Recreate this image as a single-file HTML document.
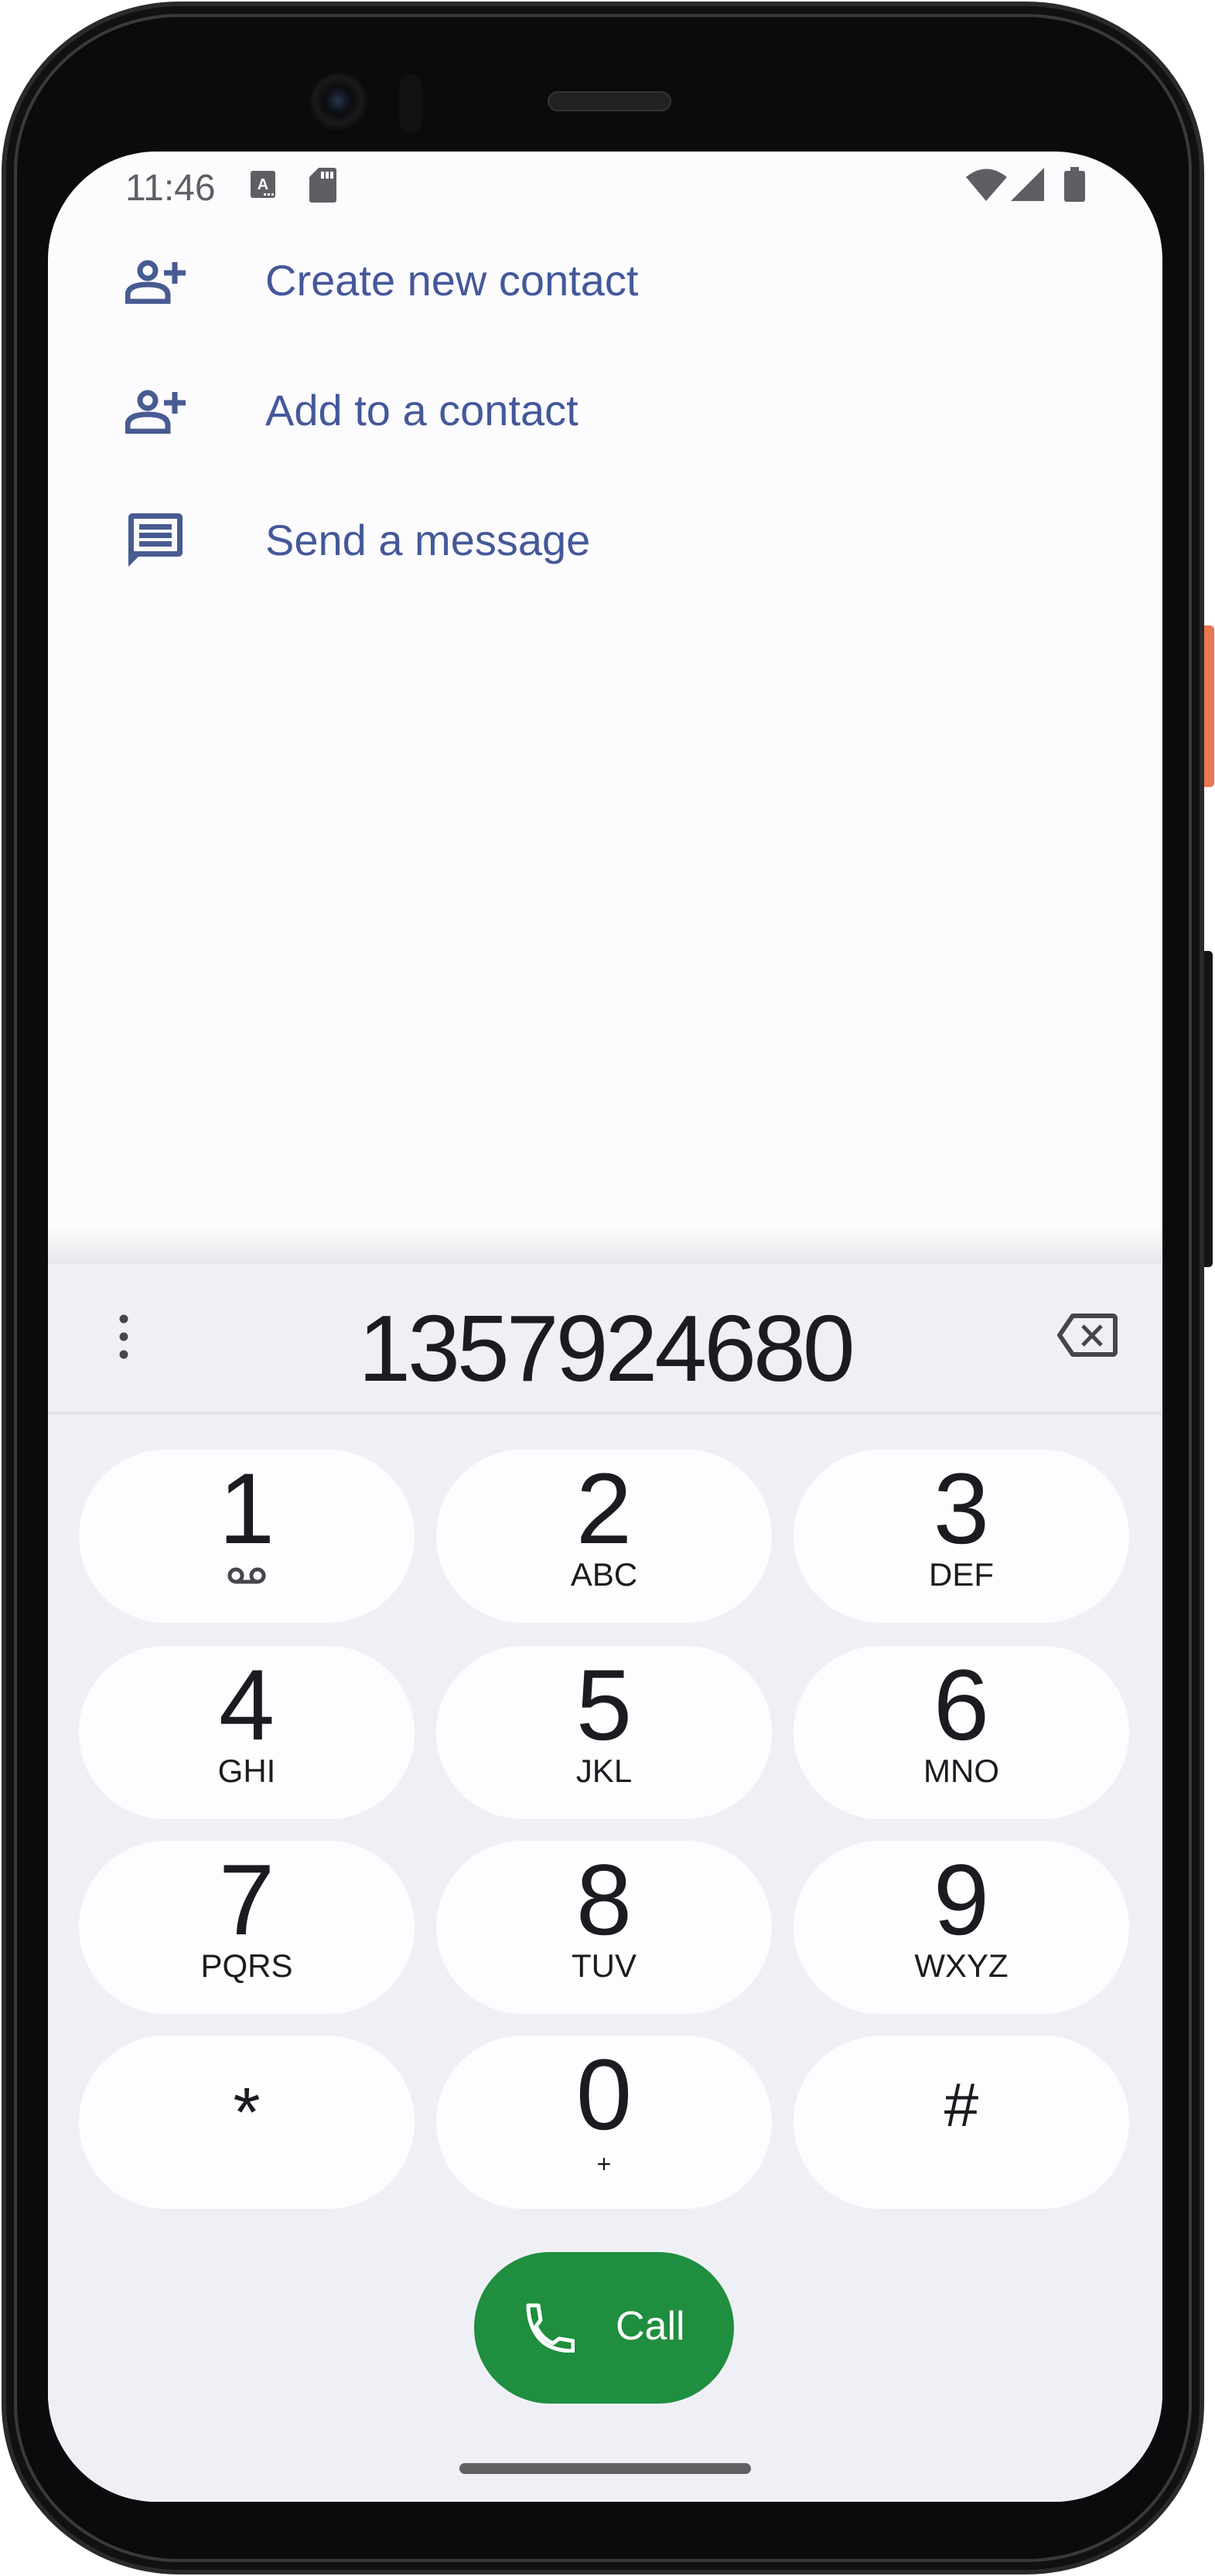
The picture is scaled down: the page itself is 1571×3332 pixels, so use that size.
<!DOCTYPE html>
<html><head><meta charset="utf-8"><style>
*{margin:0;padding:0;box-sizing:border-box}
html,body{width:1571px;height:3332px;background:#fff;overflow:hidden;font-family:"Liberation Sans",sans-serif}
.phone{position:absolute;left:2px;top:2px;width:1555px;height:3328px;border-radius:230px/220px;background:#0b0b0d;border:6px solid #2a2a2c;box-shadow:inset 0 0 0 10px #111,inset 0 0 0 14px #3a3a3c}
.btn1{position:absolute;left:1556px;top:809px;width:14px;height:209px;background:#e9774f;border-radius:0 5px 5px 0}
.btn2{position:absolute;left:1556px;top:1230px;width:12px;height:409px;background:#151517;border-radius:0 5px 5px 0}
.screen{position:absolute;left:62px;top:196px;width:1441px;height:3040px;border-radius:140px;background:#fcfbfd;overflow:hidden}
.cam{position:absolute;left:393px;top:86px;width:80px;height:80px;border-radius:50%;background:radial-gradient(circle at 45% 45%,#2a3550 0,#151a28 10px,#0d0d10 18px,#1a1a1d 30px,#0a0a0c 40px)}
.cam2{position:absolute;left:508px;top:88px;width:30px;height:76px;border-radius:15px;background:#121215}
.spk{position:absolute;left:700px;top:110px;width:160px;height:26px;border-radius:13px;background:#222;border:2px solid #333}
.st{position:absolute;color:#5f5e63;font-size:48px;left:100px;top:216px}
.item{position:absolute;left:281px;font-size:56px;color:#44589a}
.panel{position:absolute;left:0;top:1439px;width:1441px;height:1610px;background:#eff0f6}
.shadow{position:absolute;left:0;top:1390px;width:1441px;height:50px;background:linear-gradient(#fcfbfd,#e6e6ea)}
.num{position:absolute;left:0;width:1441px;top:1478px;text-align:center;font-size:122px;color:#1c1b1f;letter-spacing:-4px}
.sep{position:absolute;left:0;top:1630px;width:1441px;height:4px;background:#e2e3ea}
.key{position:absolute;width:434px;height:224px;border-radius:112px;background:#fdfcfe;text-align:center;color:#1c1b1f}
.key .d{position:absolute;left:0;right:0;top:6px;font-size:130px;line-height:140px}
.key .l{position:absolute;left:0;right:0;top:138px;font-size:42px}
.call{position:absolute;left:551px;top:2717px;width:336px;height:196px;border-radius:98px;background:#1f8e3e;color:#fff;font-size:52px}
.nav{position:absolute;left:532px;top:2990px;width:377px;height:14px;border-radius:7px;background:#616164}
</style></head><body>
<div class="btn1"></div><div class="btn2"></div>
<div class="phone">
<div class="cam"></div><div class="cam2"></div><div class="spk"></div>
</div>
<div class="screen">
<div class="st" style="left:100px;top:20px">11:46</div>
<svg style="position:absolute;left:262px;top:25px" width="32" height="35" viewBox="0 0 32 35"><rect width="32" height="35" rx="3" fill="#5f5e63"/><text x="16" y="24" font-size="20" font-weight="bold" text-anchor="middle" fill="#fff" font-family="Liberation Sans">A</text><rect x="17" y="29" width="3" height="3" fill="#fff"/><rect x="22" y="29" width="3" height="3" fill="#fff"/><rect x="27" y="29" width="3" height="3" fill="#fff"/></svg>
<svg style="position:absolute;left:338px;top:21px" width="35" height="45" viewBox="0 0 35 45"><path d="M12 0H32a3 3 0 0 1 3 3V42a3 3 0 0 1-3 3H3a3 3 0 0 1-3-3V12Z" fill="#5f5e63"/><rect x="15" y="5" width="4" height="9" fill="#fff"/><rect x="21" y="5" width="4" height="9" fill="#fff"/><rect x="27" y="5" width="4" height="9" fill="#fff"/></svg>
<svg style="position:absolute;left:1187px;top:20px" width="160" height="46" viewBox="0 0 160 46"><path d="M0 13Q26 -8 53 13L26 44Z" fill="#5f5e63"/><path d="M58 44L101 1V44Z" fill="#5f5e63"/><rect x="127" y="5" width="27" height="40" rx="3" fill="#5f5e63"/><rect x="135" y="0" width="11" height="6" fill="#5f5e63"/></svg>

<svg style="position:absolute;left:100px;top:139px" width="80" height="58" viewBox="0 0 80 58"><circle cx="29" cy="15" r="10" fill="none" stroke="#485b92" stroke-width="7"/><path d="M3 55V47Q3 33 29 33Q55 33 55 47V55Z" fill="none" stroke="#485b92" stroke-width="7"/><path d="M50 18H78M64 4V32" stroke="#485b92" stroke-width="7"/></svg>
<div class="item" style="top:134px">Create new contact</div>
<svg style="position:absolute;left:100px;top:307px" width="80" height="58" viewBox="0 0 80 58"><circle cx="29" cy="15" r="10" fill="none" stroke="#485b92" stroke-width="7"/><path d="M3 55V47Q3 33 29 33Q55 33 55 47V55Z" fill="none" stroke="#485b92" stroke-width="7"/><path d="M50 18H78M64 4V32" stroke="#485b92" stroke-width="7"/></svg>
<div class="item" style="top:302px">Add to a contact</div>
<svg style="position:absolute;left:104px;top:467px" width="72" height="72" viewBox="0 0 72 72"><path d="M0 70V6a5 5 0 0 1 5-5H65a5 5 0 0 1 5 5V52a5 5 0 0 1-5 5H13Z" fill="#485b92"/><rect x="7" y="8" width="56" height="42" fill="#fcfbfd"/><rect x="14" y="15" width="42" height="7" fill="#485b92"/><rect x="14" y="26" width="42" height="7" fill="#485b92"/><rect x="14" y="37" width="42" height="7" fill="#485b92"/></svg>
<div class="item" style="top:470px">Send a message</div>

<div class="shadow"></div>
<div class="panel"></div>
<svg style="position:absolute;left:90px;top:1503px" width="16" height="60" viewBox="0 0 16 60"><circle cx="8" cy="7" r="5.5" fill="#46454c"/><circle cx="8" cy="30" r="5.5" fill="#46454c"/><circle cx="8" cy="53" r="5.5" fill="#46454c"/></svg>
<div class="num">1357924680</div>
<svg style="position:absolute;left:1305px;top:1502px" width="78" height="58" viewBox="0 0 78 58"><path d="M20 4H72a3 3 0 0 1 3 3V51a3 3 0 0 1-3 3H20L3 29Z" fill="none" stroke="#46454c" stroke-width="6" stroke-linejoin="round"/><path d="M33 17L57 42M57 17L33 42" stroke="#46454c" stroke-width="5"/></svg>
<div class="sep"></div>

<div class="key" style="left:40px;top:1679px"><div class="d">1</div><div class="l"><svg width="52" height="26" viewBox="0 0 52 26" style="margin-top:8px"><circle cx="12" cy="13" r="8" fill="none" stroke="#46454c" stroke-width="5"/><circle cx="40" cy="13" r="8" fill="none" stroke="#46454c" stroke-width="5"/><path d="M12 21H40" stroke="#46454c" stroke-width="5"/></svg></div></div>
<div class="key" style="left:502px;top:1679px"><div class="d">2</div><div class="l">ABC</div></div>
<div class="key" style="left:964px;top:1679px"><div class="d">3</div><div class="l">DEF</div></div>
<div class="key" style="left:40px;top:1933px"><div class="d">4</div><div class="l">GHI</div></div>
<div class="key" style="left:502px;top:1933px"><div class="d">5</div><div class="l">JKL</div></div>
<div class="key" style="left:964px;top:1933px"><div class="d">6</div><div class="l">MNO</div></div>
<div class="key" style="left:40px;top:2185px"><div class="d">7</div><div class="l">PQRS</div></div>
<div class="key" style="left:502px;top:2185px"><div class="d">8</div><div class="l">TUV</div></div>
<div class="key" style="left:964px;top:2185px"><div class="d">9</div><div class="l">WXYZ</div></div>
<div class="key" style="left:40px;top:2437px"><div class="d" style="top:50px;font-size:90px;line-height:100px">*</div></div>
<div class="key" style="left:502px;top:2437px"><div class="d">0</div><div class="l" style="font-size:32px;top:148px">+</div></div>
<div class="key" style="left:964px;top:2437px"><div class="d" style="top:40px;font-size:80px;line-height:100px">#</div></div>

<div class="call"><svg style="position:absolute;left:66px;top:66px" width="64" height="64" viewBox="0 0 64 64"><path d="M4 3H17L20 22L14 30Q22 46 36 52L44 46L62 49V62Q28 62 14 40Q4 24 4 3Z" fill="none" stroke="#fff" stroke-width="5" stroke-linejoin="round"/></svg><span style="position:absolute;left:183px;top:66px">Call</span></div>
<div class="nav"></div>
</div>
</body></html>
